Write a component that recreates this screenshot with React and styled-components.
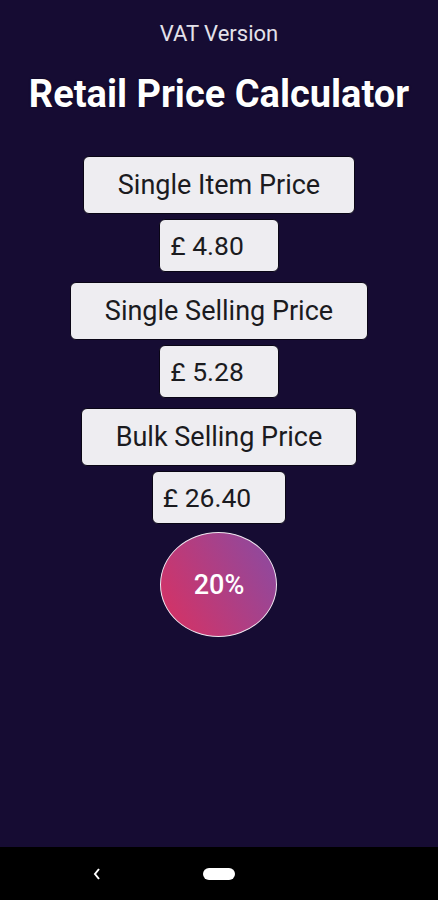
import React from "react";
import styled, { createGlobalStyle } from "styled-components";

const GlobalStyle = createGlobalStyle`
  html, body {
    margin: 0;
    padding: 0;
    background: #160c33;
  }
  body {
    font-family: Roboto, "Liberation Sans", sans-serif;
  }
`;

const Screen = styled.div`
  width: 438px;
  height: 900px;
  display: flex;
  flex-direction: column;
  background: #160c33;
`;

const Content = styled.main`
  flex: 1;
  display: flex;
  flex-direction: column;
  align-items: center;
`;

const Subtitle = styled.div`
  margin-top: 22px;
  color: #e4e2ea;
  font-size: 22px;
  line-height: 24px;
`;

const Title = styled.h1`
  margin: 26px 0 0;
  color: #fff;
  font-size: 38px;
  font-weight: 700;
  line-height: 44px;
  text-shadow: 0 0 2px rgba(0, 0, 0, 0.6);
`;

const Fields = styled.div`
  margin-top: 40px;
  display: flex;
  flex-direction: column;
  align-items: center;
`;

const Group = styled.div`
  display: flex;
  flex-direction: column;
  align-items: center;
  gap: 5px;

  & + & {
    margin-top: 10px;
  }
`;

const LabelButton = styled.button`
  height: 58px;
  padding: 0 34px;
  border: 1px solid #0a0616;
  border-radius: 6px;
  background: #eeedf1;
  color: #1b1b1f;
  font-family: Roboto, "Liberation Sans", sans-serif;
  font-size: 27px;
`;

const Value = styled.div`
  height: 53px;
  display: flex;
  align-items: center;
  padding: 0 34px 0 10px;
  border: 1px solid #0a0616;
  border-radius: 6px;
  background: #eeedf1;
  color: #1b1b1f;
  font-size: 26.5px;
  box-sizing: border-box;
`;

const Rate = styled.button`
  margin-top: 8px;
  width: 117px;
  height: 105px;
  border-radius: 50%;
  border: 1.5px solid #f0e6f0;
  background: linear-gradient(60deg, #d23367 10%, #8c4aa0 95%);
  color: #fff;
  font-family: Roboto, "Liberation Sans", sans-serif;
  font-size: 27px;
  font-weight: 500;
`;

const NavBar = styled.nav`
  height: 53px;
  background: #000;
  display: flex;
  align-items: center;
  justify-content: center;
  position: relative;
`;

const Back = styled.svg`
  position: absolute;
  left: 92px;
  top: 20px;
`;

const Home = styled.div`
  width: 32px;
  height: 12px;
  border-radius: 6px;
  background: #fff;
`;

const rows = [
  { label: "Single Item Price", value: "£ 4.80" },
  { label: "Single Selling Price", value: "£ 5.28" },
  { label: "Bulk Selling Price", value: "£ 26.40" },
];

export default function App() {
  return (
    <Screen>
      <GlobalStyle />
      <Content>
        <Subtitle>VAT Version</Subtitle>
        <Title>Retail Price Calculator</Title>
        <Fields>
          {rows.map((row) => (
            <Group key={row.label}>
              <LabelButton>{row.label}</LabelButton>
              <Value>{row.value}</Value>
            </Group>
          ))}
          <Rate>20%</Rate>
        </Fields>
      </Content>
      <NavBar>
        <Back width="10" height="14" viewBox="0 0 10 14">
          <path d="M7 2 L3 7 L7 12" stroke="#fff" strokeWidth="2" fill="none" />
        </Back>
        <Home />
      </NavBar>
    </Screen>
  );
}
